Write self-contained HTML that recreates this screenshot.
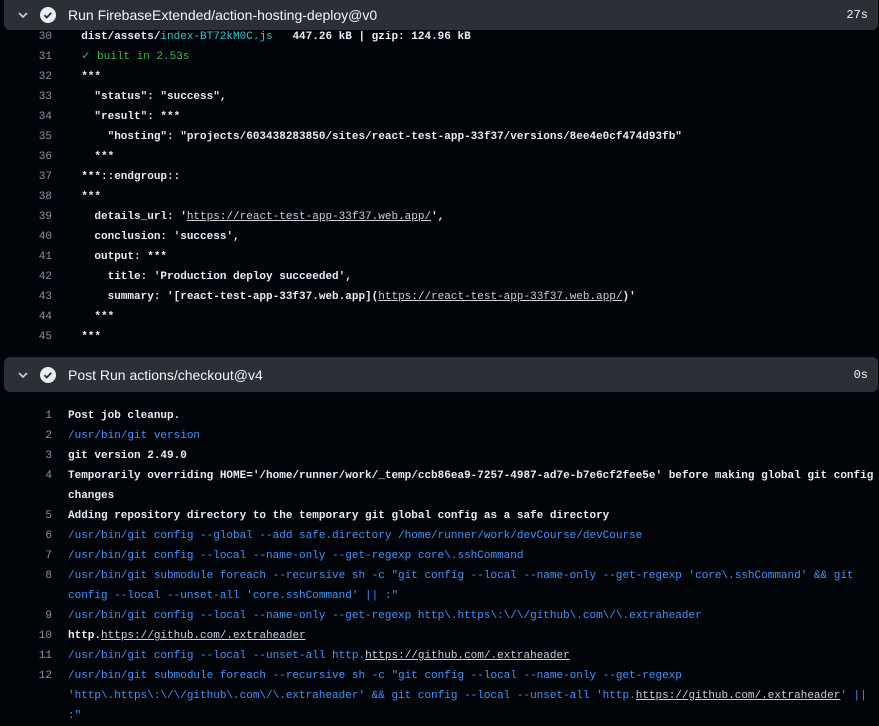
<!DOCTYPE html>
<html><head><style>
body{margin:0;background:#010409;width:879px;height:721px;overflow:hidden;position:relative;font-family:"Liberation Sans",sans-serif}
.hdr{position:absolute;left:4px;width:874px;background:#2a2f38;border-radius:6px;color:#f0f6fc;font-size:14px}
.hdr .chev{position:absolute;left:13px;top:50%;margin-top:-5px}
.hdr .chk{position:absolute;left:35px;top:50%;margin-top:-9px}
.hdr .t{position:absolute;left:64px;top:50%;transform:translateY(-50%)}
.hdr .d{position:absolute;right:10px;top:50%;transform:translateY(-50%);font-size:12px;font-family:"Liberation Mono",monospace}
.log{position:absolute;left:0;font-family:"Liberation Mono",monospace;font-size:11px;line-height:20px;color:#e6edf3;font-weight:bold}
.r{position:relative;height:20px;white-space:pre}
.n{position:absolute;left:0;width:52px;text-align:right;color:#8b949e;font-weight:normal}
.x{position:absolute;left:68px}
.b{color:#4493f8;font-weight:normal}
.c{color:#39c5cf;font-weight:normal}
.g{color:#3fb950;font-weight:normal}
.u{color:#c9d1d9;text-decoration:underline;font-weight:normal}
</style></head><body>
<div class="hdr" style="top:-6px;height:36px">
<svg class="chev" width="12" height="10" viewBox="0 0 12 10" style="margin-top:-2px"><path d="M2 3l4 4 4-4" stroke="#c9d1d9" stroke-width="1.6" fill="none"/></svg>
<svg class="chk" width="18" height="18" viewBox="0 0 18 18" style="margin-top:-6px"><circle cx="9" cy="9" r="8" fill="#e6edf3"/><path d="M5.5 9.2l2.3 2.3 4.5-4.7" stroke="#2a2f38" stroke-width="1.8" fill="none"/></svg>
<span class="t" style="margin-top:3px">Run FirebaseExtended/action-hosting-deploy@v0</span>
<span class="d" style="margin-top:3px">27s</span>
</div>
<div class="log" style="top:27px;width:879px">
<div class="r"><span class="n">30</span><span class="x">  dist/assets/<span class="c">index-BT72kM0C.js</span>   447.26 kB | gzip: 124.96 kB</span></div>
<div class="r"><span class="n">31</span><span class="x">  <span class="g">✓ built in 2.53s</span></span></div>
<div class="r"><span class="n">32</span><span class="x">  ***</span></div>
<div class="r"><span class="n">33</span><span class="x">    "status": "success",</span></div>
<div class="r"><span class="n">34</span><span class="x">    "result": ***</span></div>
<div class="r"><span class="n">35</span><span class="x">      "hosting": "projects/603438283850/sites/react-test-app-33f37/versions/8ee4e0cf474d93fb"</span></div>
<div class="r"><span class="n">36</span><span class="x">    ***</span></div>
<div class="r"><span class="n">37</span><span class="x">  ***::endgroup::</span></div>
<div class="r"><span class="n">38</span><span class="x">  ***</span></div>
<div class="r"><span class="n">39</span><span class="x">    details_url: '<span class="u">https://react-test-app-33f37.web.app/</span>',</span></div>
<div class="r"><span class="n">40</span><span class="x">    conclusion: 'success',</span></div>
<div class="r"><span class="n">41</span><span class="x">    output: ***</span></div>
<div class="r"><span class="n">42</span><span class="x">      title: 'Production deploy succeeded',</span></div>
<div class="r"><span class="n">43</span><span class="x">      summary: '[react-test-app-33f37.web.app](<span class="u">https://react-test-app-33f37.web.app/</span>)'</span></div>
<div class="r"><span class="n">44</span><span class="x">    ***</span></div>
<div class="r"><span class="n">45</span><span class="x">  ***</span></div>
</div>
<div class="hdr" style="top:357px;height:35px">
<svg class="chev" width="12" height="10" viewBox="0 0 12 10"><path d="M2 3l4 4 4-4" stroke="#c9d1d9" stroke-width="1.6" fill="none"/></svg>
<svg class="chk" width="18" height="18" viewBox="0 0 18 18"><circle cx="9" cy="9" r="8" fill="#e6edf3"/><path d="M5.5 9.2l2.3 2.3 4.5-4.7" stroke="#2a2f38" stroke-width="1.8" fill="none"/></svg>
<span class="t">Post Run actions/checkout@v4</span>
<span class="d">0s</span>
</div>
<div class="log" style="top:406px;width:879px">
<div class="r"><span class="n">1</span><span class="x">Post job cleanup.</span></div>
<div class="r"><span class="n">2</span><span class="x b">/usr/bin/git version</span></div>
<div class="r"><span class="n">3</span><span class="x">git version 2.49.0</span></div>
<div class="r"><span class="n">4</span><span class="x">Temporarily overriding HOME='/home/runner/work/_temp/ccb86ea9-7257-4987-ad7e-b7e6cf2fee5e' before making global git config</span></div>
<div class="r"><span class="x">changes</span></div>
<div class="r"><span class="n">5</span><span class="x">Adding repository directory to the temporary git global config as a safe directory</span></div>
<div class="r"><span class="n">6</span><span class="x b">/usr/bin/git config --global --add safe.directory /home/runner/work/devCourse/devCourse</span></div>
<div class="r"><span class="n">7</span><span class="x b">/usr/bin/git config --local --name-only --get-regexp core\.sshCommand</span></div>
<div class="r"><span class="n">8</span><span class="x b">/usr/bin/git submodule foreach --recursive sh -c "git config --local --name-only --get-regexp 'core\.sshCommand' &amp;&amp; git</span></div>
<div class="r"><span class="x b">config --local --unset-all 'core.sshCommand' || :"</span></div>
<div class="r"><span class="n">9</span><span class="x b">/usr/bin/git config --local --name-only --get-regexp http\.https\:\/\/github\.com\/\.extraheader</span></div>
<div class="r"><span class="n">10</span><span class="x">http.<span class="u">https://github.com/.extraheader</span></span></div>
<div class="r"><span class="n">11</span><span class="x b">/usr/bin/git config --local --unset-all http.<span class="u">https://github.com/.extraheader</span></span></div>
<div class="r"><span class="n">12</span><span class="x b">/usr/bin/git submodule foreach --recursive sh -c "git config --local --name-only --get-regexp</span></div>
<div class="r"><span class="x b">'http\.https\:\/\/github\.com\/\.extraheader' &amp;&amp; git config --local --unset-all 'http.<span class="u">https://github.com/.extraheader</span>' ||</span></div>
<div class="r"><span class="x b">:"</span></div>
</div>
</body></html>
